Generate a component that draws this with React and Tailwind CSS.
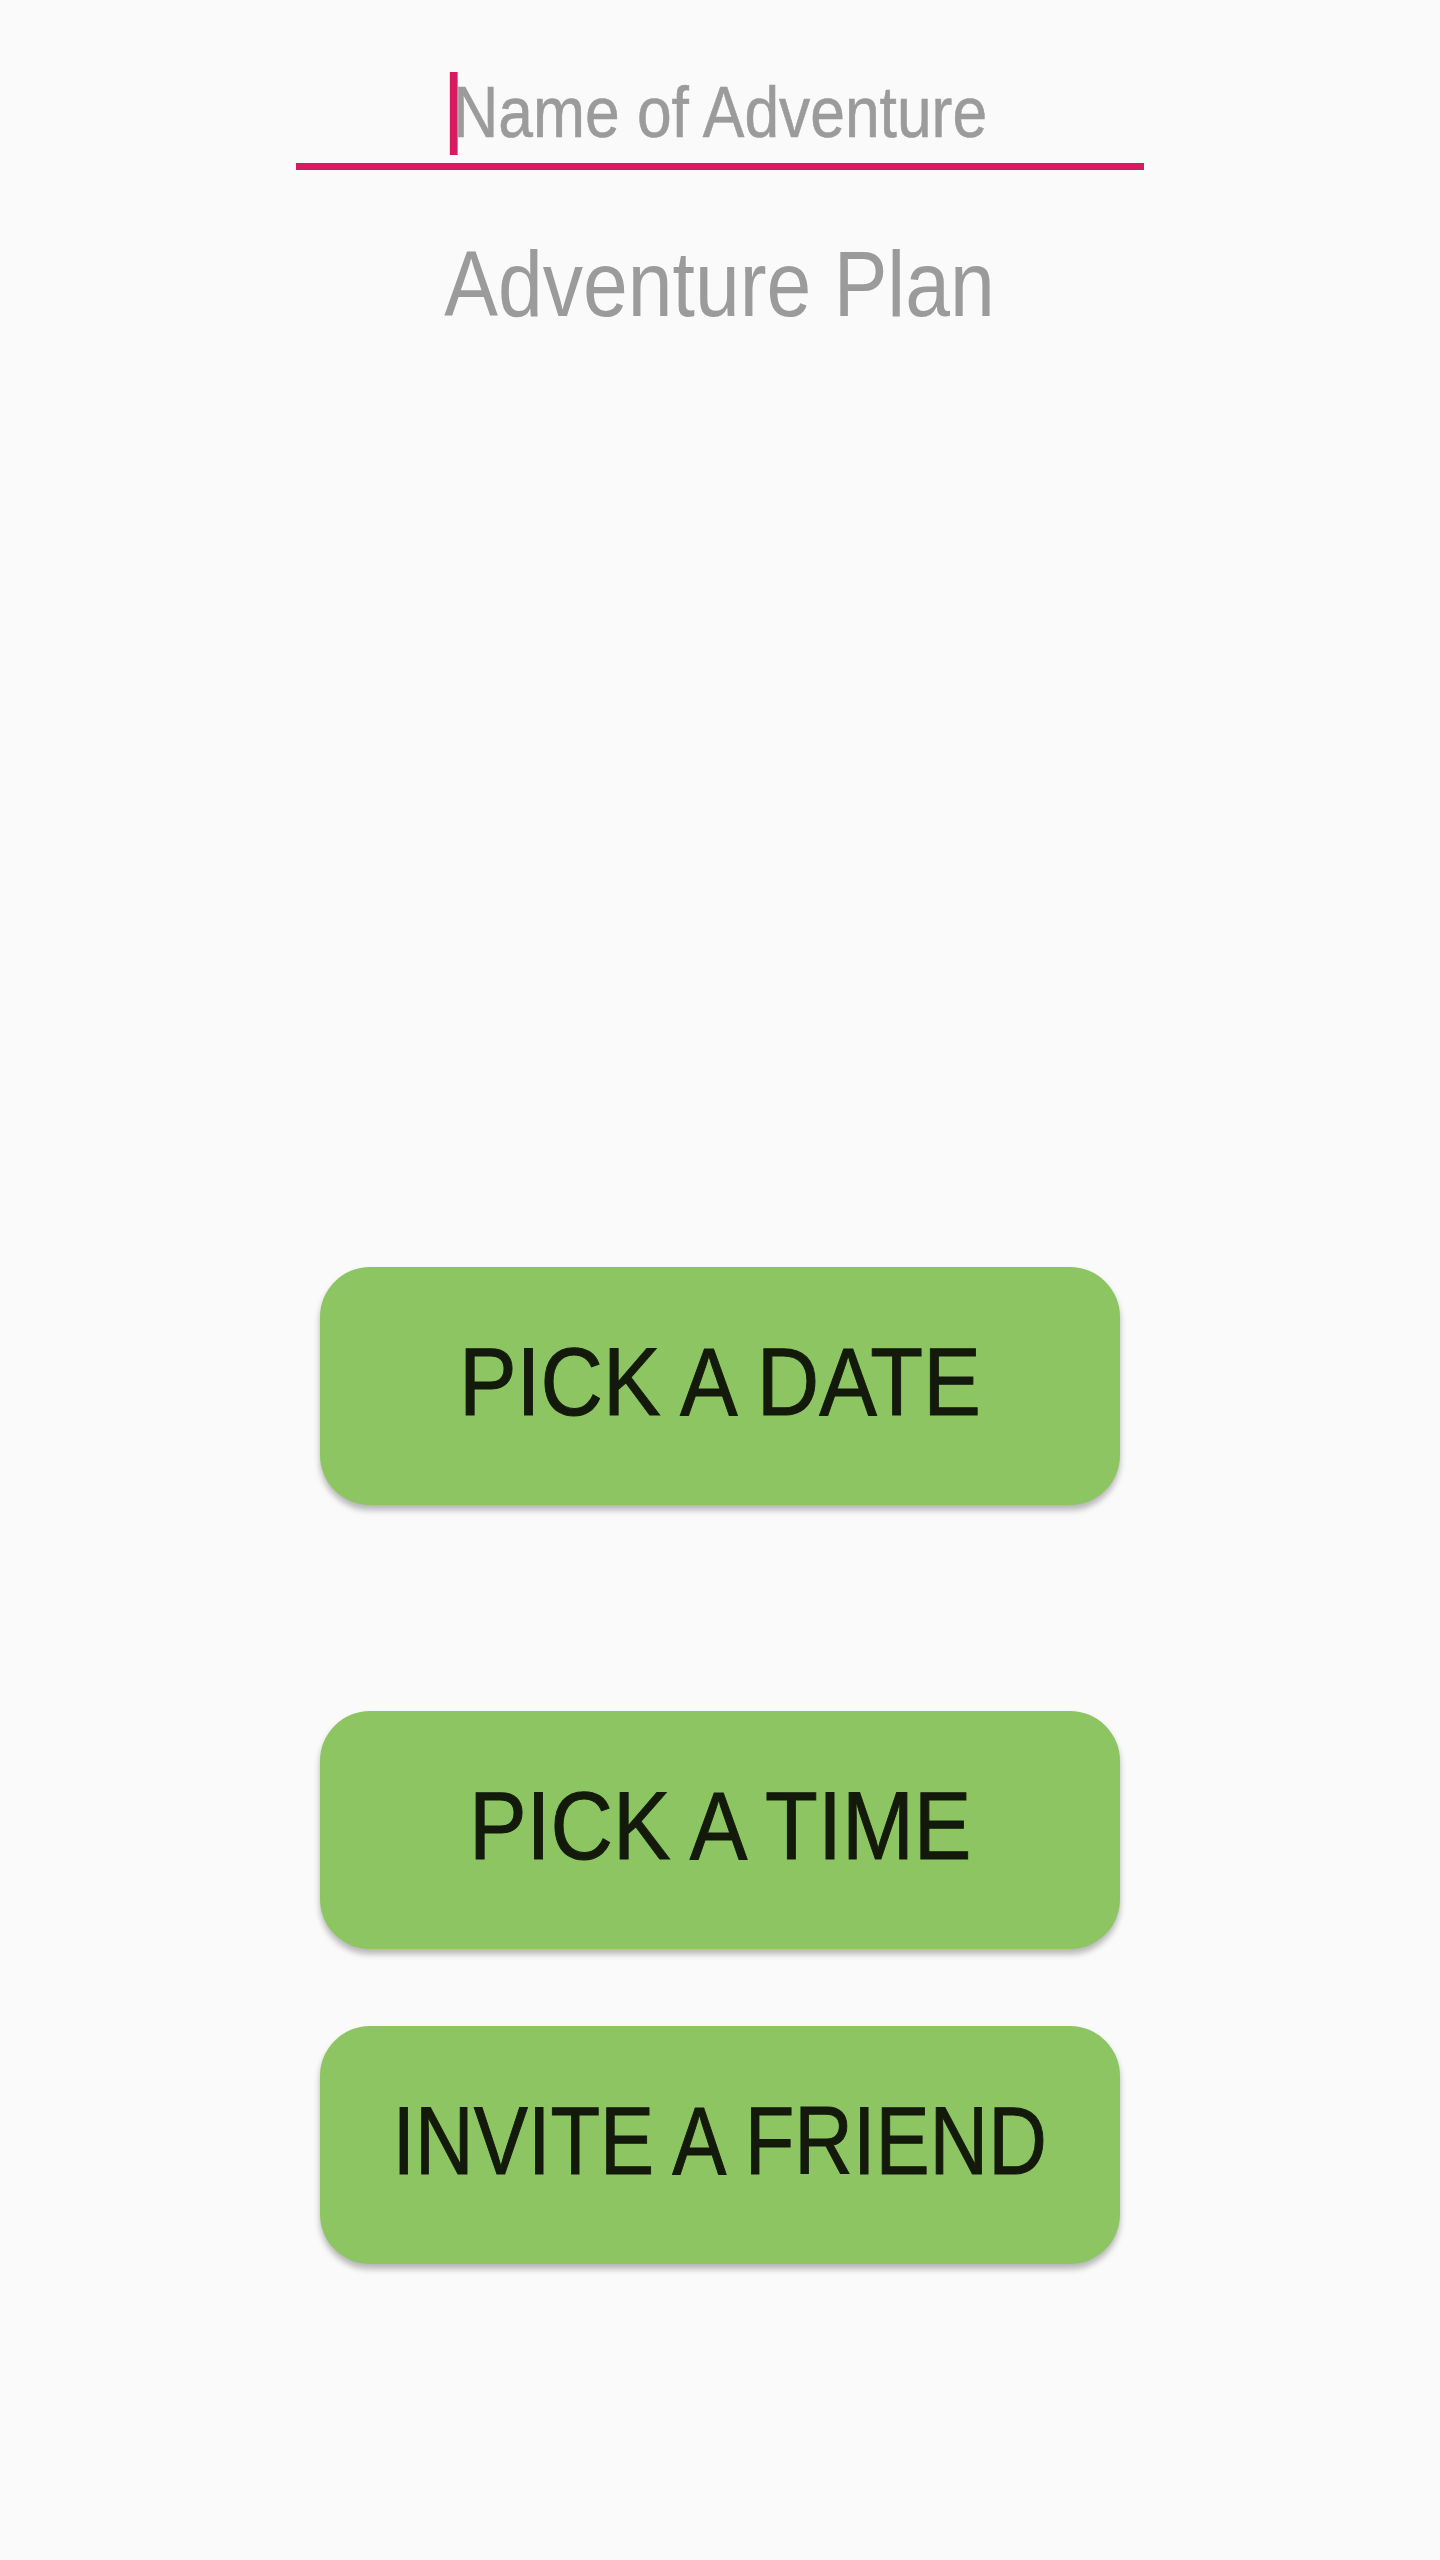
import React from "react";

const font = { fontFamily: '"Liberation Sans", Arial, sans-serif' };

function ActionButton({ label, squeeze, className = "" }) {
  return (
    <button
      className={`w-[800px] h-[238px] rounded-[50px] bg-[#8dc563] flex items-center justify-center pb-[9px] shadow-[0_5px_6px_rgba(0,0,0,0.28)] ${className}`}
    >
      <span
        className={`text-[96px] leading-none text-[#131a0c] [-webkit-text-stroke:1px_#131a0c] whitespace-nowrap ${squeeze}`}
      >
        {label}
      </span>
    </button>
  );
}

export default function App() {
  return (
    <div className="min-h-screen bg-[#fafafa] flex flex-col items-center" style={font}>
      {/* name input */}
      <div className="mt-[72px] w-[848px] h-[98px] border-b-[7px] border-[#d81b60] flex justify-center pt-[4px]">
        <span className="relative text-[72px] leading-none text-[#9b9b9b] [-webkit-text-stroke:0.6px_#9b9b9b] scale-x-[0.866] whitespace-nowrap">
          <span className="absolute left-[-4px] top-[-4px] h-[83px] w-[9px] bg-[#d81b60]" />
          Name of Adventure
        </span>
      </div>

      <h1 className="mt-[68px] text-[92px] leading-none font-normal text-[#9b9b9b] scale-x-[0.875] whitespace-nowrap">
        Adventure Plan
      </h1>

      <ActionButton label="PICK A DATE" squeeze="scale-x-[0.9]" className="mt-[937px]" />
      <ActionButton label="PICK A TIME" squeeze="scale-x-[0.9]" className="mt-[206px]" />
      <ActionButton label="INVITE A FRIEND" squeeze="scale-x-[0.846]" className="mt-[77px]" />
    </div>
  );
}
